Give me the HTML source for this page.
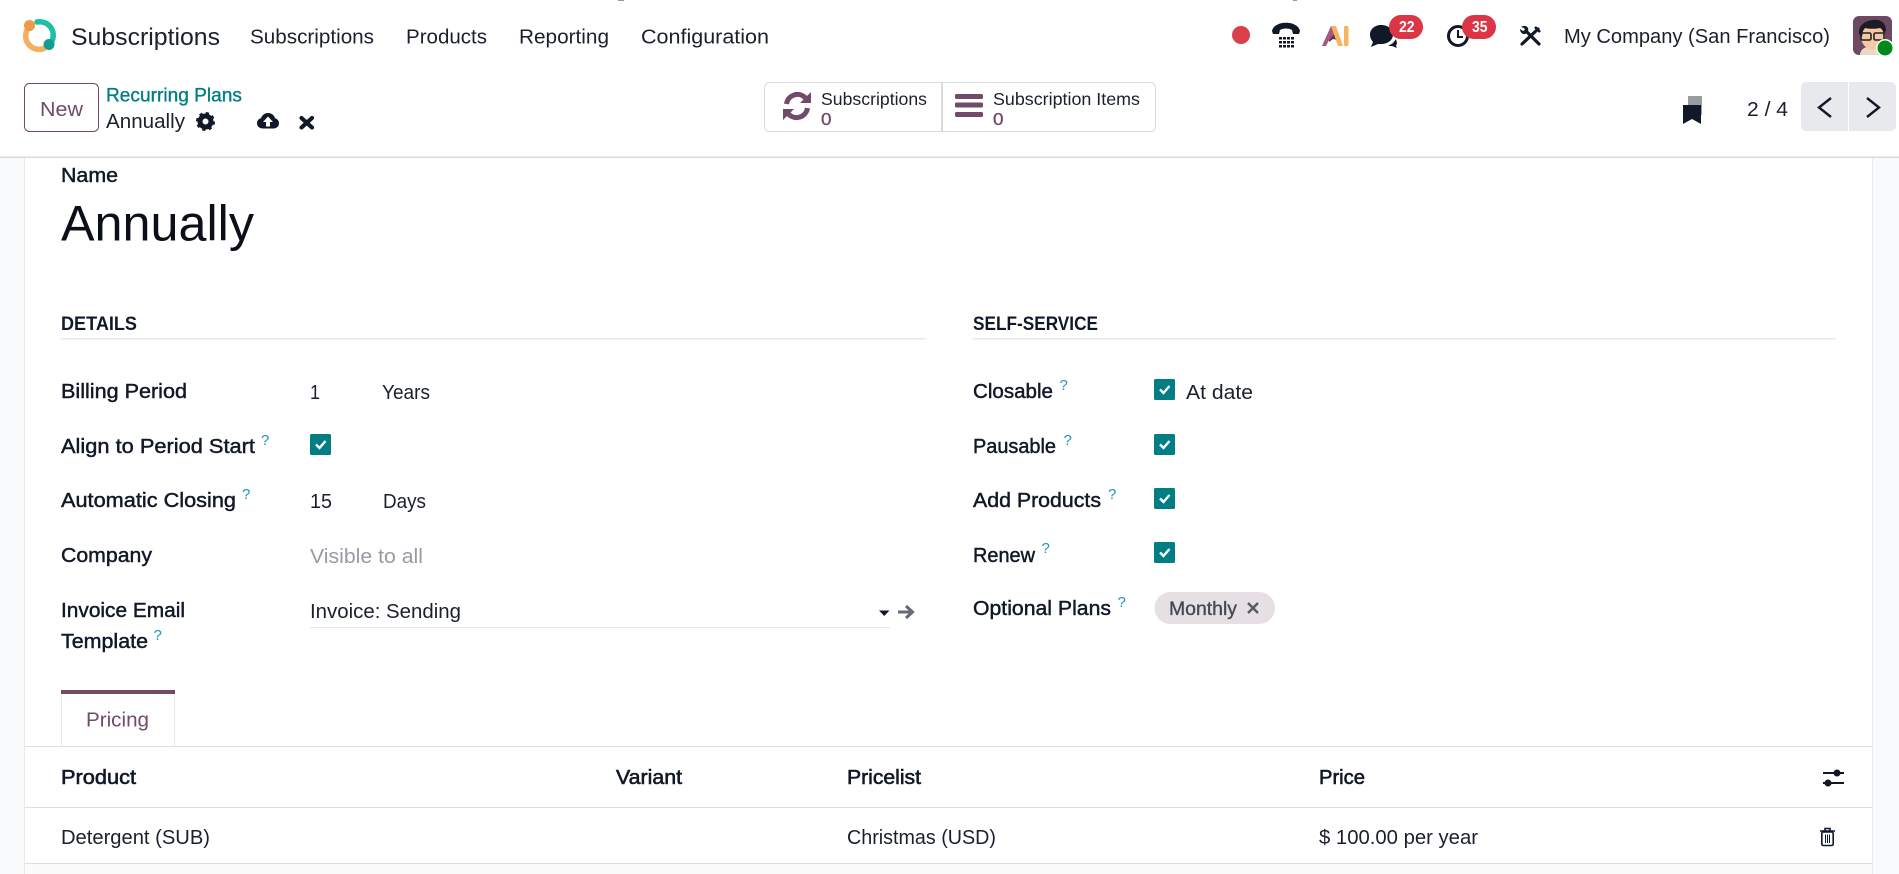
<!DOCTYPE html>
<html lang="en">
<head>
<meta charset="utf-8">
<title>Annually - Recurring Plans</title>
<style>
html,body{margin:0;padding:0;background:#fff;width:1899px;height:874px;overflow:hidden}
svg{display:block}
text{font-family:"Liberation Sans",Arial,sans-serif;font-size:20.5px;fill:#1a202c}
.m{stroke:#111827;stroke-width:.45px;fill:#111827}
.b{font-weight:bold;fill:#111827}
.h{fill:#1b96b4;font-size:15px}
.p{fill:#714B67}
</style>
</head>
<body>
<svg width="1899" height="874" viewBox="0 0 1899 874" xmlns="http://www.w3.org/2000/svg">
<rect width="1899" height="874" fill="#fff"/>
<rect x="0" y="158" width="25" height="716" fill="#f9fafb"/>
<rect x="1873" y="158" width="26" height="716" fill="#f9fafb"/>
<rect x="25" y="864" width="1848" height="10" fill="#fbfbfc"/>
<rect x="24" y="158" width="1" height="716" fill="#e7e9ed"/>
<rect x="1872" y="158" width="1" height="716" fill="#e7e9ed"/>
<rect x="0" y="156.5" width="1899" height="1.5" fill="#d8dadd"/>
<rect x="618" y="0" width="6" height="1" fill="#999"/>
<rect x="1293" y="0" width="4" height="1" fill="#999"/>

<!-- logo -->
<path d="M29 27A13.5 13.5 0 0 0 44 48.5" fill="none" stroke="#f6ae5f" stroke-width="5.5" stroke-linecap="round"/>
<path d="M37 22A13.5 13.5 0 0 1 50 44" fill="none" stroke="#1fbfa4" stroke-width="5.5" stroke-linecap="round"/>
<circle cx="29.5" cy="25.5" r="5.5" fill="#ea9a48"/>
<circle cx="49" cy="44.5" r="5.5" fill="#0f9f8e"/>

<!-- nav -->
<text x="71" y="45" style="font-size:24.5px" textLength="149" lengthAdjust="spacingAndGlyphs">Subscriptions</text>
<text x="250" y="43.5" textLength="124" lengthAdjust="spacingAndGlyphs">Subscriptions</text>
<text x="406" y="43.5" textLength="81" lengthAdjust="spacingAndGlyphs">Products</text>
<text x="519" y="43.5" textLength="90" lengthAdjust="spacingAndGlyphs">Reporting</text>
<text x="641" y="43.5" textLength="128" lengthAdjust="spacingAndGlyphs">Configuration</text>

<!-- systray -->
<circle cx="1241" cy="35" r="9" fill="#d9404a"/>
<path d="M1272 31c2-11 26-11 28 0l-1 3h-6l-1-4c-3-2-9-2-12 0l-1 4h-6z" fill="#111827"/>
<g fill="#111827">
<rect x="1279" y="37" width="3" height="2.5"/><rect x="1283" y="37" width="3" height="2.5"/><rect x="1287" y="37" width="3" height="2.5"/><rect x="1291" y="37" width="3" height="2.5"/>
<rect x="1279" y="41" width="3" height="2.5"/><rect x="1283" y="41" width="3" height="2.5"/><rect x="1287" y="41" width="3" height="2.5"/><rect x="1291" y="41" width="3" height="2.5"/>
<rect x="1279" y="45" width="3" height="2.5"/><rect x="1283" y="45" width="3" height="2.5"/><rect x="1287" y="45" width="3" height="2.5"/><rect x="1291" y="45" width="3" height="2.5"/>
</g>
<path d="M1322 46l9-20h2l1 8-5 6-3 6z" fill="#a4587f"/>
<path d="M1329 40l5-6 3 6-4-1-4 3z" fill="#5c3447"/>
<path d="M1331 26h5l7 20h-5z" fill="#f7b55f"/>
<rect x="1344" y="26" width="4.5" height="20" rx="1" fill="#f7b55f"/>
<path d="M1381 25c7 0 12 4 12 9.500s-5 9.500-12 9.500l-3 0-7 3 2-5c-2-2-3-4.500-3-7.500 0-5.500 5-9.500 11-9.500z" fill="#111827"/>
<path d="M1388 46l5-3 3-4 1 4-1 3 1 2-5-2z" fill="#111827"/>
<rect x="1389" y="15" width="34" height="24" rx="12" fill="#dc3545"/>
<text x="1399" y="32" class="b" style="font-size:15.500px;fill:#fff" textLength="15.500" lengthAdjust="spacingAndGlyphs">22</text>
<circle cx="1458" cy="36" r="9.500" fill="#fff" stroke="#111827" stroke-width="3"/>
<path d="M1458 30v7h5" fill="none" stroke="#111827" stroke-width="2"/>
<rect x="1462" y="15" width="34" height="24" rx="12" fill="#dc3545"/>
<text x="1472" y="32" class="b" style="font-size:15.500px;fill:#fff" textLength="15.500" lengthAdjust="spacingAndGlyphs">35</text>
<path d="M1522 44l16-15" stroke="#111827" stroke-width="3.200" stroke-linecap="round"/>
<path d="M1535 27l5 5" stroke="#111827" stroke-width="2.600"/>
<path d="M1526 31l13 13" stroke="#111827" stroke-width="3.200" stroke-linecap="round"/>
<path d="M1521 27c3-2 6-1 7 1 1 3-1 6-4 6-2 0-4-2-4-5l3 2 2-1-1-2z" fill="#111827"/>
<text x="1564" y="43" textLength="266" lengthAdjust="spacingAndGlyphs">My Company (San Francisco)</text>

<!-- avatar -->
<rect x="1853" y="16" width="39" height="39" rx="6" fill="#6d4a61"/>
<path d="M1860 55c0-6 6-9 13-9s14 3 14 9z" fill="#e9d9c5"/>
<ellipse cx="1873" cy="37" rx="12" ry="12.500" fill="#f2c9a4"/>
<path d="M1859 34c-1-9 7-14 15-14 6-1 12 3 12 10l-2 4c-1-3-2-5-4-6-5 1-11 1-15 0l-2 3-1 6z" fill="#1d1c24"/>
<rect x="1861" y="33" width="10" height="7" rx="1.500" fill="none" stroke="#222" stroke-width="1.600"/>
<rect x="1874" y="33" width="10" height="7" rx="1.500" fill="none" stroke="#222" stroke-width="1.600"/>
<circle cx="1885" cy="48" r="9" fill="#fff"/>
<circle cx="1885" cy="48" r="7.500" fill="#00881a"/>

<!-- control panel -->
<rect x="24.500" y="83.500" width="74" height="48" rx="5" fill="#fff" stroke="#714B67" stroke-width="1"/>
<text x="40" y="116" class="p" textLength="43" lengthAdjust="spacingAndGlyphs">New</text>
<text x="106" y="101.500" textLength="136" lengthAdjust="spacingAndGlyphs" style="fill:#017E84;stroke:#017E84;stroke-width:.35px;font-size:19.500px">Recurring Plans</text>
<text x="106" y="128" textLength="79" lengthAdjust="spacingAndGlyphs">Annually</text>
<circle cx="205.500" cy="121.500" r="5.500" fill="none" stroke="#111827" stroke-width="5"/>
<circle cx="205.500" cy="121.500" r="8" fill="none" stroke="#111827" stroke-width="3" stroke-dasharray="3.100 3.180"/>
<path d="M263 128.500c-3.500 0-6-2.300-6-5.300 0-2.500 1.600-4.500 4-5 1-3 3.800-5.200 7-5.200 3.500 0 6.300 2.200 7 5.300 2.500.6 4 2.600 4 5 0 3-2.500 5.200-5.500 5.200z" fill="#111827"/>
<path d="M268 116.500l5 5.500h-3v4.500h-4V122h-3z" fill="#fff"/>
<path d="M301.500 118l10.500 9.500M312 118l-10.500 9.500" stroke="#111827" stroke-width="4.200" stroke-linecap="round"/>

<!-- stat buttons -->
<rect x="764.500" y="82.500" width="391" height="49" rx="5" fill="#fff" stroke="#d8dadd"/>
<rect x="941" y="83" width="2" height="48" fill="#d8dadd"/>
<g fill="none" stroke="#714B67" stroke-width="5">
<path d="M786.500 104A11 11 0 0 1 805.500 98"/>
<path d="M807.500 108A11 11 0 0 1 788.500 114"/>
</g>
<path d="M811 92v11h-11zM783 120v-11h11z" fill="#714B67"/>
<text x="821" y="105" style="font-size:17.500px" textLength="106" lengthAdjust="spacingAndGlyphs">Subscriptions</text>
<text x="821" y="125" class="p" style="font-size:17.500px;stroke:#714B67;stroke-width:.3px" textLength="10.500" lengthAdjust="spacingAndGlyphs">0</text>
<rect x="955" y="94" width="28" height="5" rx="1.500" fill="#714B67"/>
<rect x="955" y="102.500" width="28" height="5" rx="1.500" fill="#714B67"/>
<rect x="955" y="112" width="28" height="5" rx="1.500" fill="#714B67"/>
<text x="993" y="105" style="font-size:17.500px" textLength="147" lengthAdjust="spacingAndGlyphs">Subscription Items</text>
<text x="993" y="125" class="p" style="font-size:17.500px;stroke:#714B67;stroke-width:.3px" textLength="10.500" lengthAdjust="spacingAndGlyphs">0</text>

<!-- pager -->
<path d="M1688 96h14v19h-14z" fill="#999ba1"/>
<path d="M1683 105h18v19l-9-5-9 5z" fill="#111827"/>
<text x="1747" y="116" textLength="41" lengthAdjust="spacingAndGlyphs">2 / 4</text>
<rect x="1801" y="82" width="95" height="49" rx="5" fill="#e7e9ed"/>
<rect x="1848" y="82" width="1" height="49" fill="#fff"/>
<path d="M1831 98l-12 9.500 12 9.500M1867 98l12 9.500-12 9.500" fill="none" stroke="#111827" stroke-width="2.400"/>

<!-- title -->
<text x="61" y="182" class="m" textLength="57" lengthAdjust="spacingAndGlyphs">Name</text>
<text x="61" y="240.700" style="font-size:50px;fill:#0b0f18" textLength="193" lengthAdjust="spacingAndGlyphs">Annually</text>

<!-- details -->
<text x="61" y="330" class="b" style="font-size:19px" textLength="76" lengthAdjust="spacingAndGlyphs">DETAILS</text>
<rect x="61" y="338" width="864" height="1.500" fill="#e5e7ea"/>
<text x="61" y="398" class="m" textLength="126" lengthAdjust="spacingAndGlyphs">Billing Period</text>
<text x="310" y="399" textLength="10" lengthAdjust="spacingAndGlyphs">1</text>
<text x="382" y="399" textLength="48" lengthAdjust="spacingAndGlyphs">Years</text>

<text x="61" y="453" class="m" textLength="194" lengthAdjust="spacingAndGlyphs">Align to Period Start</text>
<text x="261" y="445" class="h">?</text>
<rect x="310" y="434" width="21" height="21" rx="1.500" fill="#017E84"/>
<path d="M316 444.500l3.500 3.500 6-7" fill="none" stroke="#fff" stroke-width="2.400"/>

<text x="61" y="507" class="m" textLength="175" lengthAdjust="spacingAndGlyphs">Automatic Closing</text>
<text x="242" y="499" class="h">?</text>
<text x="310" y="508" textLength="22" lengthAdjust="spacingAndGlyphs">15</text>
<text x="383" y="508" textLength="43" lengthAdjust="spacingAndGlyphs">Days</text>

<text x="61" y="562" class="m" textLength="91" lengthAdjust="spacingAndGlyphs">Company</text>
<text x="310" y="563" style="fill:#999ba3" textLength="113" lengthAdjust="spacingAndGlyphs">Visible to all</text>

<text x="61" y="617" class="m" textLength="124" lengthAdjust="spacingAndGlyphs">Invoice Email</text>
<text x="61" y="648" class="m" textLength="87" lengthAdjust="spacingAndGlyphs">Template</text>
<text x="153.500" y="640" class="h">?</text>
<text x="310" y="618" textLength="151" lengthAdjust="spacingAndGlyphs">Invoice: Sending</text>
<rect x="310" y="627" width="580" height="1" fill="#e5e7ea"/>
<path d="M879 610.500h10.500l-5.250 5.500z" fill="#111827"/>
<path d="M898 612h15M906 606l6.500 6-6.500 6" fill="none" stroke="#666a75" stroke-width="3"/>

<!-- self service -->
<text x="973" y="330" class="b" style="font-size:19px" textLength="125" lengthAdjust="spacingAndGlyphs">SELF-SERVICE</text>
<rect x="973" y="338" width="863" height="1.500" fill="#e5e7ea"/>

<text x="973" y="398" class="m" textLength="80" lengthAdjust="spacingAndGlyphs">Closable</text>
<text x="1059.500" y="390" class="h">?</text>
<rect x="1154" y="379" width="21" height="21" rx="1.500" fill="#017E84"/>
<path d="M1160 389.500l3.500 3.500 6-7" fill="none" stroke="#fff" stroke-width="2.400"/>
<text x="1186" y="399" textLength="67" lengthAdjust="spacingAndGlyphs">At date</text>

<text x="973" y="453" class="m" textLength="83" lengthAdjust="spacingAndGlyphs">Pausable</text>
<text x="1063.500" y="445" class="h">?</text>
<rect x="1154" y="434" width="21" height="21" rx="1.500" fill="#017E84"/>
<path d="M1160 444.500l3.500 3.500 6-7" fill="none" stroke="#fff" stroke-width="2.400"/>

<text x="973" y="507" class="m" textLength="128" lengthAdjust="spacingAndGlyphs">Add Products</text>
<text x="1108" y="499" class="h">?</text>
<rect x="1154" y="488" width="21" height="21" rx="1.500" fill="#017E84"/>
<path d="M1160 498.500l3.500 3.500 6-7" fill="none" stroke="#fff" stroke-width="2.400"/>

<text x="973" y="562" class="m" textLength="62" lengthAdjust="spacingAndGlyphs">Renew</text>
<text x="1041.500" y="553" class="h">?</text>
<rect x="1154" y="542" width="21" height="21" rx="1.500" fill="#017E84"/>
<path d="M1160 552.500l3.500 3.500 6-7" fill="none" stroke="#fff" stroke-width="2.400"/>

<text x="973" y="615" class="m" textLength="138" lengthAdjust="spacingAndGlyphs">Optional Plans</text>
<text x="1117.500" y="607" class="h">?</text>
<rect x="1154.500" y="592" width="120.500" height="32" rx="16" fill="#e6dfe3"/>
<text x="1169" y="615" style="font-size:19px;fill:#444a56;stroke:#444a56;stroke-width:.35px" textLength="68" lengthAdjust="spacingAndGlyphs">Monthly</text>
<path d="M1248 603l10 10M1258 603l-10 10" stroke="#555a66" stroke-width="2.400"/>

<!-- tab -->
<path d="M61.500 694V746M174.500 694V746" stroke="#e7e9ed" fill="none"/>
<rect x="61" y="690" width="114" height="4" fill="#714B67"/>
<text x="86" y="726.700" class="p" textLength="63" lengthAdjust="spacingAndGlyphs">Pricing</text>
<rect x="25" y="746" width="1847" height="1" fill="#dcdee1"/>

<!-- table -->
<text x="61" y="784" class="m" style="stroke-width:.6px" textLength="75" lengthAdjust="spacingAndGlyphs">Product</text>
<text x="616" y="784" class="m" style="stroke-width:.6px" textLength="66" lengthAdjust="spacingAndGlyphs">Variant</text>
<text x="847" y="784" class="m" style="stroke-width:.6px" textLength="74" lengthAdjust="spacingAndGlyphs">Pricelist</text>
<text x="1319" y="784" class="m" style="stroke-width:.6px" textLength="46" lengthAdjust="spacingAndGlyphs">Price</text>
<path d="M1823 773h21M1823 783h21" stroke="#111827" stroke-width="2"/>
<circle cx="1837" cy="773" r="3.500" fill="#111827"/>
<circle cx="1828" cy="783" r="3.500" fill="#111827"/>
<rect x="25" y="807" width="1847" height="1" fill="#dcdee1"/>
<text x="61" y="844" textLength="149" lengthAdjust="spacingAndGlyphs">Detergent (SUB)</text>
<text x="847" y="844" textLength="149" lengthAdjust="spacingAndGlyphs">Christmas (USD)</text>
<text x="1319" y="844" textLength="159" lengthAdjust="spacingAndGlyphs">$ 100.00 per year</text>
<path d="M1820 831h15M1825 831v-2.500h5v2.500" fill="none" stroke="#111827" stroke-width="1.600"/>
<rect x="1821.800" y="832" width="11.400" height="13.500" rx="1.500" fill="none" stroke="#111827" stroke-width="1.600"/>
<path d="M1825.500 834.500v8.500M1827.500 834.500v8.500M1829.500 834.500v8.500" stroke="#111827" stroke-width="1"/>
<rect x="25" y="863" width="1847" height="1" fill="#dcdee1"/>
</svg>
</body>
</html>
